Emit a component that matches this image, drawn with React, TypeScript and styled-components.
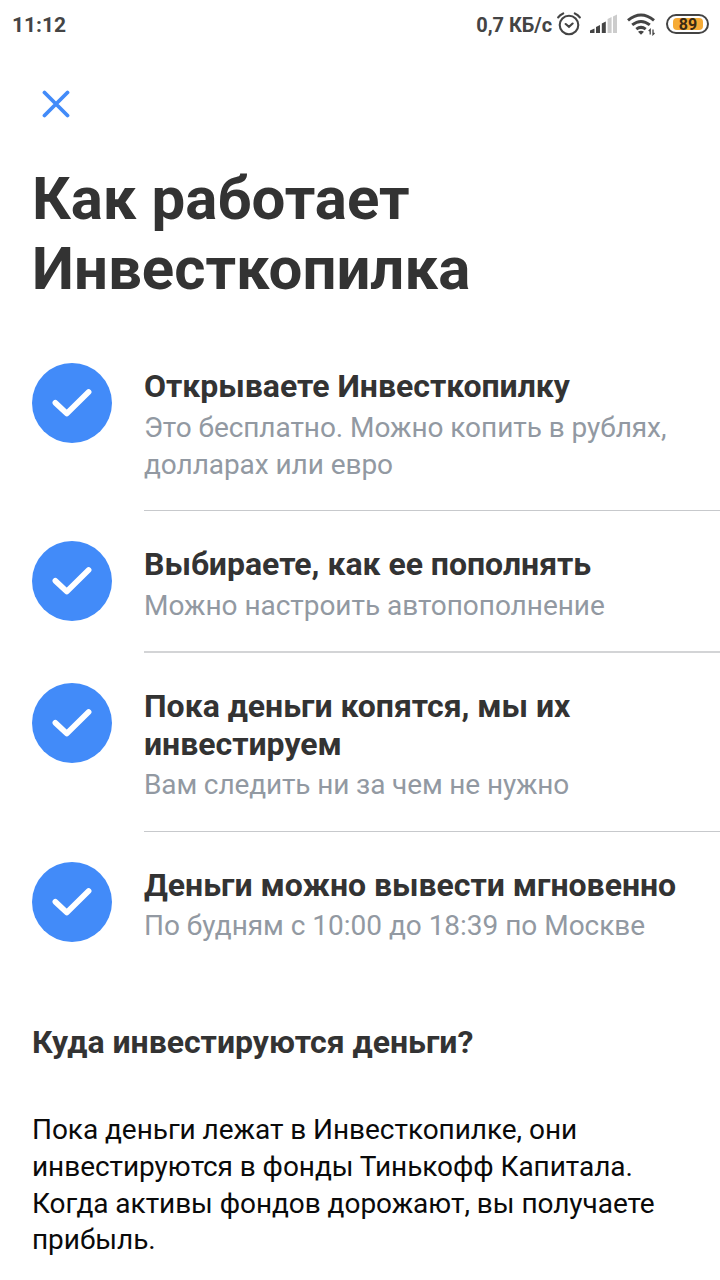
import React from 'react';
import styled, { createGlobalStyle } from 'styled-components';

const GlobalStyle = createGlobalStyle`
  * { box-sizing: border-box; }
  body { margin: 0; background: #fff; font-family: Roboto, sans-serif; overflow: hidden; }
  h1, h2, h3, p, ul { margin: 0; padding: 0; }
`;

const Screen = styled.div`
  width: 720px;
  height: 1280px;
  overflow: hidden;
  background: #fff;
`;

const StatusBar = styled.header`
  display: flex;
  justify-content: space-between;
  align-items: center;
  height: 48px;
  padding: 0 11px 0 12px;
  color: #444;
  font: 700 20px/24px Roboto, sans-serif;
`;

const Clock = styled.span`
  padding-top: 1px;
  font-size: 21px;
`;

const StatusIcons = styled.div`
  display: flex;
  align-items: center;
  svg { display: block; }
`;

const Speed = styled.span`
  padding-top: 1px;
  margin-right: 5px;
  letter-spacing: -0.05px;
`;

const Indicators = styled.div`
  display: grid;
  grid-template-columns: 24px 28px 29px;
  align-items: center;
  column-gap: 9px;
  margin-right: 10px;
`;

const Battery = styled.span`
  display: flex;
  align-items: center;
  justify-content: center;
  width: 43px;
  height: 20px;
  padding: 2px 4px 2px 5px;
  border: 2px solid #444;
  border-radius: 10px;
`;

const BatteryLevel = styled.span`
  width: 100%;
  height: 12px;
  border-radius: 4px;
  background: #f6ab36;
  color: #3a2a14;
  font-size: 16px;
  line-height: 13px;
  text-align: center;
`;

const Toolbar = styled.nav`
  height: 112px;
  padding: 42px 0 0 42px;
`;

const CloseButton = styled.button`
  display: block;
  width: 28px;
  height: 28px;
  padding: 0;
  border: 0;
  background: none;
`;

const Title = styled.h1`
  padding: 4px 32px 0;
  color: #333;
  font-size: 60px;
  line-height: 70px;
  font-weight: 700;
`;

const Steps = styled.ul`
  list-style: none;
  padding-top: 59px;
`;

const Step = styled.li`
  display: flex;
  padding-left: 32px;
`;

const Badge = styled.span`
  flex: none;
  width: 80px;
  height: 80px;
  margin-right: 32px;
  border-radius: 50%;
  background: #428bf9;
`;

const StepBody = styled.div<{ $height: number; $divider: number }>`
  flex: 1;
  height: ${p => p.$height}px;
  padding-top: 4px;
  border-bottom: ${p => p.$divider}px solid ${p => (p.$divider > 1 ? '#d3d4d6' : '#c7c9cc')};
  margin-bottom: 30px;
`;

const StepTitle = styled.h2`
  color: #333;
  font-size: 32px;
  line-height: 38px;
  font-weight: 700;
  letter-spacing: -0.02px;
  white-space: pre-line;
`;

const StepText = styled.p<{ $tracking: number; $gap: number }>`
  padding-top: ${p => p.$gap}px;
  color: #9299a2;
  font-size: 28px;
  line-height: 37px;
  letter-spacing: ${p => p.$tracking}px;
  white-space: pre-line;
`;

const Question = styled.h3`
  padding: 0 32px;
  color: #333;
  font-size: 32px;
  line-height: 38px;
  letter-spacing: -0.02px;
`;

const Answer = styled.p`
  padding: 51px 32px 0;
  color: #0a0a0a;
  font-size: 28px;
  line-height: 36.75px;
  letter-spacing: -0.05px;
  white-space: pre-line;
`;

const steps = [
  { title: 'Открываете Инвесткопилку', text: 'Это бесплатно. Можно копить в рублях,\nдолларах или евро', height: 148, divider: 1, gap: 4, tracking: -0.06 },
  { title: 'Выбираете, как ее пополнять', text: 'Можно настроить автопополнение', height: 112, divider: 2, gap: 4, tracking: -0.04 },
  { title: 'Пока деньги копятся, мы их\nинвестируем', text: 'Вам следить ни за чем не нужно', height: 149, divider: 1, gap: 3, tracking: -0.13 },
  { title: 'Деньги можно вывести мгновенно', text: 'По будням с 10:00 до 18:39 по Москве', height: 131, divider: 0, gap: 3, tracking: -0.02 },
];

const CheckIcon = () => (
  <svg width="80" height="80" viewBox="0 0 80 80" fill="none">
    <path d="M23.4 39.8L34.8 50.5L56.6 29" stroke="#fff" strokeWidth="5.7" strokeLinecap="round" strokeLinejoin="round" />
  </svg>
);

const AlarmIcon = () => (
  <svg width="24" height="24" viewBox="0 0 24 24" fill="none" stroke="#444" strokeWidth="2.1" strokeLinecap="round">
    <circle cx="12" cy="13" r="9.3" />
    <path d="M8.7 12l3.3 2.8 3.6-3.3M1.2 5.4Q3 2.6 6.2 1.4M22.8 5.4Q21 2.6 17.8 1.4" />
  </svg>
);

const SignalIcon = () => (
  <svg width="28" height="20" viewBox="0 0 28 20">
    <path fill="#444" d="M0 19v-2.5l4.500-2V19zM6 19v-6l4-2v8zM11.800 19V9.500l4-2V19z" />
    <path fill="#ccc" d="M17.6 19V5l4-2v16zM23 19V2.500l4-2V19z" />
  </svg>
);

const WifiIcon = () => (
  <svg width="29" height="23" viewBox="0 0 29 23" fill="none" stroke="#444" strokeWidth="3">
    <path d="M1 7.3Q14 -3.300 27 7.300M5.200 11.900Q14 5 22.800 11.900M9.300 16.100Q14 12.600 18.700 16.100" />
    <path d="M11 18.8Q14 16.500 17 18.800L14 21.800z" fill="#444" stroke="none" />
    <path d="M23.2 21.5v-5l-1.500 1.500M26 16.500v5l1.500-1.500" strokeWidth="1.3" />
  </svg>
);

export default function App() {
  return (
    <Screen>
      <GlobalStyle />
      <StatusBar>
        <Clock>11:12</Clock>
        <StatusIcons>
          <Speed>0,7 КБ/с</Speed>
          <Indicators>
            <AlarmIcon />
            <SignalIcon />
            <WifiIcon />
          </Indicators>
          <Battery><BatteryLevel>89</BatteryLevel></Battery>
        </StatusIcons>
      </StatusBar>
      <Toolbar>
        <CloseButton aria-label="Закрыть">
          <svg width="28" height="28" viewBox="0 0 28 28">
            <path d="M2.5 2.5l23 23M25.5 2.5l-23 23" stroke="#428bf9" strokeWidth="3.8" strokeLinecap="round" />
          </svg>
        </CloseButton>
      </Toolbar>
      <Title>Как работает<br />Инвесткопилка</Title>
      <Steps>
        {steps.map(s => (
          <Step key={s.title}>
            <Badge><CheckIcon /></Badge>
            <StepBody $height={s.height} $divider={s.divider}>
              <StepTitle>{s.title}</StepTitle>
              <StepText $tracking={s.tracking} $gap={s.gap}>{s.text}</StepText>
            </StepBody>
          </Step>
        ))}
      </Steps>
      <Question>Куда инвестируются деньги?</Question>
      <Answer>{'Пока деньги лежат в Инвесткопилке, они\nинвестируются в фонды Тинькофф Капитала.\nКогда активы фондов дорожают, вы получаете\nприбыль.'}</Answer>
    </Screen>
  );
}
